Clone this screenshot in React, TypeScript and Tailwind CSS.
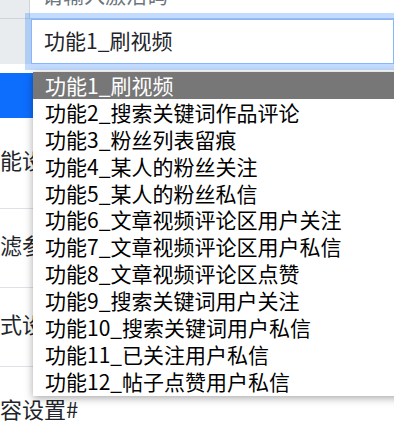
const options = [
  "功能1_刷视频",
  "功能2_搜索关键词作品评论",
  "功能3_粉丝列表留痕",
  "功能4_某人的粉丝关注",
  "功能5_某人的粉丝私信",
  "功能6_文章视频评论区用户关注",
  "功能7_文章视频评论区用户私信",
  "功能8_文章视频评论区点赞",
  "功能9_搜索关键词用户关注",
  "功能10_搜索关键词用户私信",
  "功能11_已关注用户私信",
  "功能12_帖子点赞用户私信",
]

const labels = [
  { text: "功能设置", h: "h-[91px]" },
  { text: "过滤参数", h: "h-[79px]" },
  { text: "模式设置", h: "h-[79px]" },
]

export default function App() {
  return (
    <div
      className="relative w-[394px] h-[430px] overflow-hidden bg-white text-[#212529]"
      style={{ fontFamily: '"Noto Sans CJK SC", "Noto Sans", sans-serif' }}
    >
      {/* activation code input, scrolled mostly out of view */}
      <div className="flex h-[19px] border-b border-[#ced4da] overflow-hidden">
        <div className="w-[30px] bg-[#e9ecef] border-r border-[#ced4da]" />
        <div className="flex-1 pl-[12px]">
          <div className="-mt-[21px] text-[21px] leading-[30px] text-[#6c757d]">请输入激活码</div>
        </div>
      </div>

      {/* function select */}
      <div className="flex h-[45px]">
        <div className="w-[31px] bg-[#e9ecef]" />
        <div className="relative flex-1 flex items-center pl-[12px] bg-white border border-[#86b7fe] shadow-[0_0_0_6px_rgba(13,110,253,0.25)] z-10">
          <span className="text-[21px] leading-none -mt-[2px]">功能1_刷视频</span>
        </div>
      </div>

      <div className="mt-[9px] h-[45px] w-[120px] bg-[#0d6efd]" />

      <div className="-ml-[22px]">
        {labels.map((l) => (
          <div key={l.text} className={`${l.h} flex items-center pb-[7px] border-b border-[#dee2e6] text-[22px]`}>
            {l.text}
          </div>
        ))}
        <div className="h-[82px] flex items-center text-[22px] leading-none">内容设置#</div>
      </div>

      {/* open dropdown list */}
      <div className="absolute left-[33px] top-[72px] w-[380px] bg-white shadow-[0_2px_8px_rgba(0,0,0,0.35)] z-20 pb-[1px]">
        {options.map((o, i) => (
          <div
            key={o}
            className={`h-[26.9px] flex items-center pl-[12px] text-[21px] leading-none ${
              i === 0 ? "bg-[#777777] text-white" : "text-black"
            }`}
          >
            {o}
          </div>
        ))}
      </div>
    </div>
  )
}
